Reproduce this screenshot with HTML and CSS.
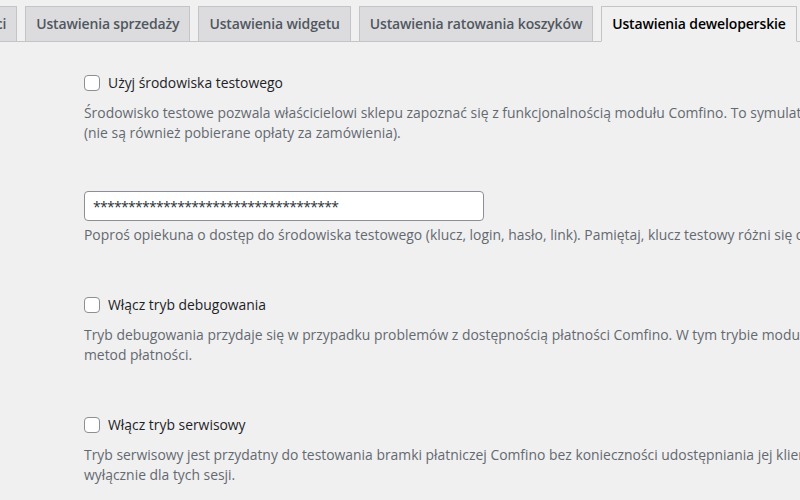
FILE: index.html
```html
<!DOCTYPE html>
<html lang="pl">
<head>
    <meta charset="UTF-8">
    <meta name="viewport" content="width=device-width, initial-scale=1.0">
    <title>Comfino - Ustawienia deweloperskie</title>
    <link rel="stylesheet" href="styles.css">
</head>
<body>
    <div class="wrap">
        <nav class="nav-tab-wrapper">
            <a href="#" class="nav-tab nav-tab-first">Ustawienia płatności</a>
            <a href="#" class="nav-tab">Ustawienia sprzedaży</a>
            <a href="#" class="nav-tab">Ustawienia widgetu</a>
            <a href="#" class="nav-tab">Ustawienia ratowania koszyków</a>
            <a href="#" class="nav-tab nav-tab-active">Ustawienia deweloperskie</a>
        </nav>

        <form class="settings">
            <div class="field">
                <label class="check-line">
                    <input type="checkbox" class="check">
                    <span>Użyj środowiska testowego</span>
                </label>
                <p class="description">Środowisko testowe pozwala właścicielowi sklepu zapoznać się z funkcjonalnością modułu Comfino. To symulator płatności, w którym nie są zawierane prawdziwe umowy<br>(nie są również pobierane opłaty za zamówienia).</p>
            </div>

            <div class="field">
                <input type="text" class="regular-text" value="***********************************">
                <p class="description tight">Poproś opiekuna o dostęp do środowiska testowego (klucz, login, hasło, link). Pamiętaj, klucz testowy różni się od klucza produkcyjnego.</p>
            </div>

            <div class="field">
                <label class="check-line">
                    <input type="checkbox" class="check">
                    <span>Włącz tryb debugowania</span>
                </label>
                <p class="description">Tryb debugowania przydaje się w przypadku problemów z dostępnością płatności Comfino. W tym trybie moduł rejestruje szczegóły działania wewnętrznych procesów odpowiedzialnych za wyświetlanie<br>metod płatności.</p>
            </div>

            <div class="field">
                <label class="check-line">
                    <input type="checkbox" class="check">
                    <span>Włącz tryb serwisowy</span>
                </label>
                <p class="description">Tryb serwisowy jest przydatny do testowania bramki płatniczej Comfino bez konieczności udostępniania jej klientom. Płatności są dostępne<br>wyłącznie dla tych sesji.</p>
            </div>
        </form>
    </div>
</body>
</html>
```

FILE: styles.css
```css
html, body {
    margin: 0;
    padding: 0;
    overflow: hidden;
}

body {
    background: #f0f0f1;
    color: #3c434a;
    font-family: 'Open Sans', 'Noto Sans', sans-serif;
    font-size: 13.9px;
    line-height: 1.4;
}

.wrap {
    width: 1200px;
}

.nav-tab-wrapper {
    display: flex;
    padding-top: 6px;
    border-bottom: 1px solid #c3c4c7;
    margin-left: -142px;
}

.nav-tab {
    display: block;
    margin-left: 8px;
    margin-bottom: -1px;
    padding: 5px 10px;
    border: 1px solid #c3c4c7;
    background: #dcdcde;
    color: #50575e;
    font-size: 14px;
    font-weight: 600;
    letter-spacing: -0.15px;
    line-height: 24px;
    text-decoration: none;
    white-space: nowrap;
}

.nav-tab-first {
    margin-left: 0;
}

.nav-tab-active {
    background: #f0f0f1;
    border-bottom-color: #f0f0f1;
    color: #000;
}

.settings {
    padding: 29px 0 0 84px;
}

.field {
    margin-bottom: 48px;
}

.check-line {
    display: flex;
    align-items: center;
    gap: 8px;
    height: 24px;
    color: #1d2327;
    cursor: pointer;
}

.check {
    appearance: none;
    width: 16px;
    height: 16px;
    margin: 0;
    border: 1px solid #8c8f94;
    border-radius: 4px;
    background: #fff;
}

.description {
    margin: 8px 0 0;
    color: #646970;
    line-height: 20px;
    white-space: nowrap;
}

.description.tight {
    margin-top: 4px;
}

.regular-text {
    display: block;
    box-sizing: border-box;
    width: 400px;
    height: 30px;
    margin: 0;
    padding: 0 8px;
    border: 1px solid #8c8f94;
    border-radius: 4px;
    background: #fff;
    color: #2c3338;
    font-family: inherit;
    font-size: 14px;
    letter-spacing: -0.7px;
}
```
